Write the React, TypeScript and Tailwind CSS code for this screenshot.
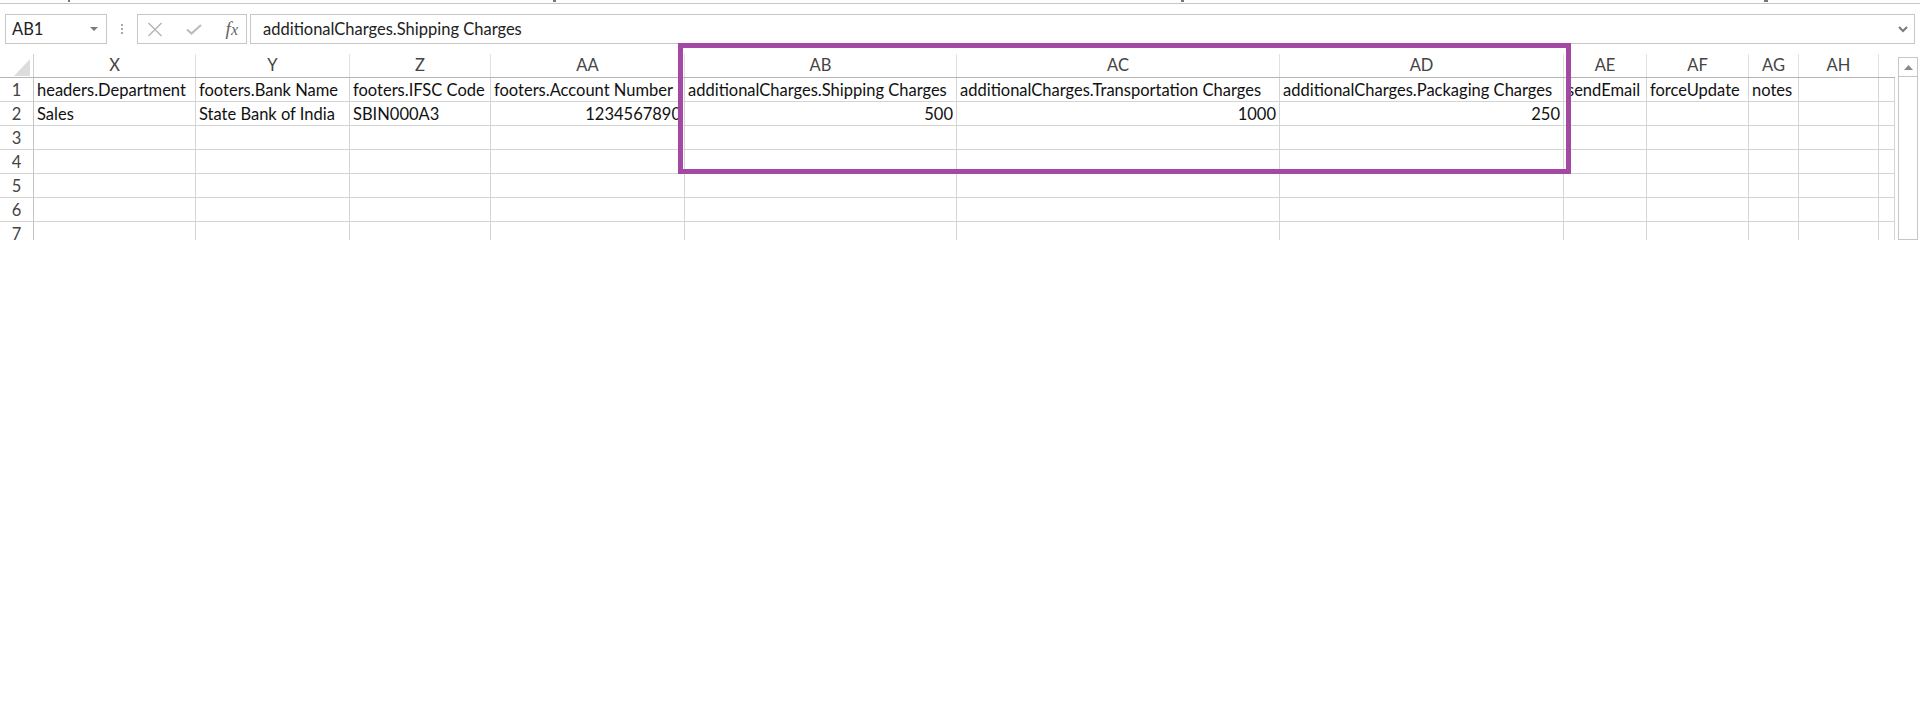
import React from 'react';

const COLS = [
  { id: 'X', w: 'w-[162px]' },
  { id: 'Y', w: 'w-[154px]' },
  { id: 'Z', w: 'w-[141px]' },
  { id: 'AA', w: 'w-[194px]' },
  { id: 'AB', w: 'w-[272px]' },
  { id: 'AC', w: 'w-[323px]' },
  { id: 'AD', w: 'w-[284px]' },
  { id: 'AE', w: 'w-[83px]' },
  { id: 'AF', w: 'w-[102px]' },
  { id: 'AG', w: 'w-[50px]' },
  { id: 'AH', w: 'w-[80px]' },
  { id: '', w: 'w-[16px]' },
];

const DATA: string[][] = [
  ['headers.Department', 'footers.Bank Name', 'footers.IFSC Code', 'footers.Account Number', 'additionalCharges.Shipping Charges', 'additionalCharges.Transportation Charges', 'additionalCharges.Packaging Charges', 'sendEmail', 'forceUpdate', 'notes'],
  ['Sales', 'State Bank of India', 'SBIN000A3', '1234567890', '500', '1000', '250'],
  [], [], [], [], [],
];

const isNum = (v: string) => /^\d+$/.test(v);

function NameBox() {
  return (
    <div className="w-[102px] border border-[#c6c6c6] flex items-center justify-between pl-[6px] pr-[8px] text-[#222]">
      <span>AB1</span>
      <svg width="8" height="5" viewBox="0 0 8 5"><polygon points="0,0 8,0 4,4" fill="#7a7a7a" /></svg>
    </div>
  );
}

function FormulaButtons() {
  return (
    <div className="w-[110px] border border-[#c6c6c6] flex items-center justify-between pl-[9px] pr-[8px]">
      <svg width="16" height="15" viewBox="0 0 16 15">
        <path d="M1.5 1 L14.5 14 M14.5 1 L1.5 14" stroke="#b4b4b4" strokeWidth="1.4" fill="none" />
      </svg>
      <svg width="16" height="11" viewBox="0 0 16 11">
        <path d="M1 5.5 L5.5 9.5 L15 1" stroke="#bdbdbd" strokeWidth="2.2" fill="none" />
      </svg>
      <span className="italic text-[#666] text-[19px] leading-none pb-[2px]" style={{ fontFamily: '"Liberation Serif", "DejaVu Serif", serif' }}>
        f<span className="text-[16px]">x</span>
      </span>
    </div>
  );
}

export default function App() {
  return (
    <div
      className="w-[1920px] h-[706px] bg-white relative overflow-hidden text-[16.5px] text-[#111]"
      style={{ fontFamily: 'Lato, "Open Sans", sans-serif' }}
    >
      {/* clipped ribbon remnants */}
      <div className="h-[3px] relative">
        <div className="absolute left-[68px] top-0 w-[2px] h-[2px] bg-[#777]" />
        <div className="absolute left-[553px] top-0 w-[3px] h-[2px] bg-[#777]" />
        <div className="absolute left-[1181px] top-0 w-[3px] h-[2px] bg-[#777]" />
        <div className="absolute left-[1764px] top-0 w-[4px] h-[2px] bg-[#777]" />
      </div>
      <div className="h-px bg-[#c6c6c6]" />
      <div className="h-[10px]" />

      {/* formula bar */}
      <div className="flex h-[30px] pl-[5px]">
        <NameBox />
        <div className="w-[30px] flex flex-col items-center justify-center gap-[2px]">
          <div className="w-[2px] h-[2px] bg-[#a8a8a8]" />
          <div className="w-[2px] h-[2px] bg-[#a8a8a8]" />
          <div className="w-[2px] h-[2px] bg-[#a8a8a8]" />
        </div>
        <FormulaButtons />
        <div className="w-[3px]" />
        <div className="w-[1665px] border border-[#c6c6c6] flex items-center justify-between pl-[12px] pr-[6px] text-[#222]">
          <span>additionalCharges.Shipping Charges</span>
          <svg width="10" height="7" viewBox="0 0 10 7">
            <path d="M1 1 L5 5 L9 1" stroke="#7a7a7a" strokeWidth="2" fill="none" />
          </svg>
        </div>
      </div>
      <div className="h-[10px]" />

      {/* sheet */}
      <div className="flex h-[186px]">
        <div className="w-[1895px] overflow-hidden">
          <div className="flex h-[24px] border-b border-[#b5b5b5] text-[#444]">
            <div className="w-[34px] border-r border-[#d0d0d0] flex items-end justify-end pr-[3px] pb-[1px]">
              <svg width="16" height="17" viewBox="0 0 16 17"><polygon points="16,0 16,17 0,17" fill="#dcdcdc" /></svg>
            </div>
            {COLS.map((c, i) => (
              <div
                key={c.id + i}
                className={`${c.w} shrink-0 ${i < COLS.length - 1 ? 'border-r border-[#e1e1e1]' : ''} flex items-center justify-center leading-none`}
              >
                {c.id}
              </div>
            ))}
          </div>
          {DATA.map((row, r) => (
            <div key={r} className="flex h-[24px]">
              <div className="w-[34px] shrink-0 border-r border-b border-r-[#c4c4c4] border-b-[#d4d4d4] text-center text-[#444] leading-[23px] pt-px">
                {r + 1}
              </div>
              {COLS.map((c, i) => {
                const v = row[i] ?? '';
                return (
                  <div
                    key={c.id + i}
                    className={`${c.w} shrink-0 border-r border-b border-[#d4d4d4] overflow-hidden whitespace-nowrap leading-[23px] pt-px px-[3px] flex ${isNum(v) ? 'justify-end' : 'justify-start'}`}
                  >
                    <span className="shrink-0">{v}</span>
                  </div>
                );
              })}
            </div>
          ))}
        </div>
        <div className="w-[3px]" />
        <div className="w-[20px] mt-[3px] border border-[#c6c6c6] flex flex-col">
          <div className="h-[19px] border-b border-[#c6c6c6] flex items-center justify-center">
            <svg width="9" height="5" viewBox="0 0 9 5"><polygon points="0,5 9,5 4.5,0" fill="#8a8a8a" /></svg>
          </div>
        </div>
      </div>

      {/* annotation */}
      <div className="absolute left-[678px] top-[43px] w-[893px] h-[131px] border-[5px] border-[#a349a4]" />
    </div>
  );
}
